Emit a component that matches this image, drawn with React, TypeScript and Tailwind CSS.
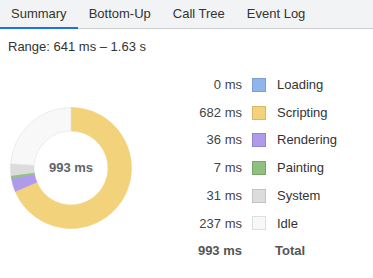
import React from "react";

const items = [
  { label: "Loading", value: 0, fill: "#8fb5ea", border: "#7b9fd2" },
  { label: "Scripting", value: 682, fill: "#f3d27c", border: "#d9b969" },
  { label: "Rendering", value: 36, fill: "#b09beb", border: "#9683d2" },
  { label: "Painting", value: 7, fill: "#8fc080", border: "#77a86a" },
  { label: "System", value: 31, fill: "#dcdcdc", border: "#c3c3c3" },
  { label: "Idle", value: 237, fill: "#f8f8f8", border: "#dedede" },
];

const total = 993;

function Donut() {
  const cx = 61;
  const cy = 61;
  const R = 60.5;
  const r = 37;
  let acc = 0;
  const pt = (rad: number, a: number) => {
    const ang = a * 2 * Math.PI - Math.PI / 2;
    return [cx + rad * Math.cos(ang), cy + rad * Math.sin(ang)];
  };
  const slices = items
    .filter((i) => i.value > 0)
    .map((i) => {
      const a0 = acc / total;
      acc += i.value;
      const a1 = acc / total;
      const large = a1 - a0 > 0.5 ? 1 : 0;
      const [x0, y0] = pt(R, a0);
      const [x1, y1] = pt(R, a1);
      const [x2, y2] = pt(r, a1);
      const [x3, y3] = pt(r, a0);
      const d = `M${x0} ${y0} A${R} ${R} 0 ${large} 1 ${x1} ${y1} L${x2} ${y2} A${r} ${r} 0 ${large} 0 ${x3} ${y3} Z`;
      return <path key={i.label} d={d} fill={i.fill} stroke={i.label === "Idle" ? "#e2e2e2" : i.fill} strokeWidth={0.6} />;
    });
  return (
    <div className="relative w-[122px] h-[122px]">
      <svg width="122" height="122" viewBox="0 0 122 122">
        {slices}
      </svg>
      <div className="absolute inset-0 flex items-center justify-center text-[13px] font-bold text-[#5f6368]">
        993 ms
      </div>
    </div>
  );
}

export default function App() {
  const tabs = ["Summary", "Bottom-Up", "Call Tree", "Event Log"];
  return (
    <div
      className="w-[373px] h-[278px] bg-white text-[#333] overflow-hidden"
      style={{ fontFamily: '"Liberation Sans", Arial, sans-serif' }}
    >
      <div className="flex h-[29px] bg-[#f1f3f4] border-b border-[#cbcdd1]">
        {tabs.map((t, i) => (
          <div key={t} className="relative flex items-center px-[11px] text-[13px] text-[#333] pb-[1px]">
            {t}
            {i === 0 && <div className="absolute left-0 right-0 bottom-[-1px] h-[2px] bg-[#1a73e8]" />}
          </div>
        ))}
      </div>
      <div className="h-[36px] flex items-center px-[8px] text-[13px] text-[#333]">Range: 641 ms – 1.63 s</div>
      <div className="flex items-start pt-[6px] pl-[10px]">
        <div className="mt-[36px]">
          <Donut />
        </div>
        <div className="ml-[29px] flex flex-col text-[13px]">
          {items.map((i) => (
            <div key={i.label} className="flex items-center h-[27.7px]">
              <div className="w-[81px] text-right text-[#444]">{i.value} ms</div>
              <div
                className="ml-[10px] w-[14px] h-[14px] border"
                style={{ backgroundColor: i.fill, borderColor: i.border }}
              />
              <div className="ml-[11px] text-[#333]">{i.label}</div>
            </div>
          ))}
          <div className="flex items-center h-[27.7px] font-bold text-[#555]">
            <div className="w-[81px] text-right">993 ms</div>
            <div className="ml-[33px]">Total</div>
          </div>
        </div>
      </div>
    </div>
  );
}
